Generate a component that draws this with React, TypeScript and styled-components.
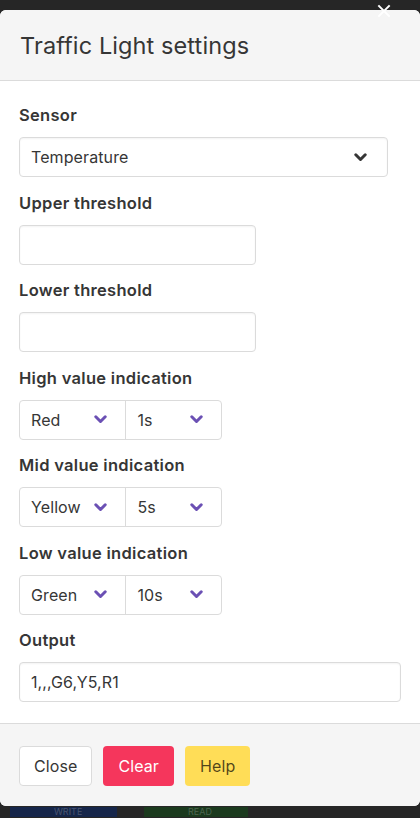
import React from "react";
import styled, { createGlobalStyle } from "styled-components";

const Global = createGlobalStyle`
  html, body { margin: 0; padding: 0; background: #262626; }
  body { font-family: Inter, "Noto Sans", "Liberation Sans", sans-serif; color: #363636; }
  * { box-sizing: border-box; }
`;

const Page = styled.div`
  position: relative;
  width: 420px;
  height: 818px;
  overflow: hidden;
  background: #262626;
  padding-top: 10px;
`;

const CloseX = styled.div`
  position: absolute;
  top: 4px;
  right: 29px;
  width: 14px;
  height: 14px;
  z-index: 3;
  &::before, &::after {
    content: "";
    position: absolute;
    left: 6px;
    top: -1px;
    width: 2px;
    height: 16px;
    background: #fff;
  }
  &::before { transform: rotate(45deg); }
  &::after { transform: rotate(-45deg); }
`;

const Card = styled.div`
  width: 420px;
  border-radius: 6px;
  overflow: hidden;
  background: #fff;
  display: flex;
  flex-direction: column;
`;

const Head = styled.header`
  background: #f5f5f5;
  border-bottom: 1px solid #dbdbdb;
  padding: 0 20px;
  height: 71px;
  display: flex;
  align-items: center;
`;

const Title = styled.h1`
  margin: 0;
  font-size: 23.5px;
  font-weight: 400;
  color: #363636;
  letter-spacing: 0.1px;
`;

const Body = styled.section`
  padding: 22px 19px 21px 19px;
  display: flex;
  flex-direction: column;
`;

const Field = styled.div`
  margin-bottom: 13.5px;
  &:last-child { margin-bottom: 0; }
`;

const Label = styled.label`
  display: block;
  font-size: 16.5px;
  line-height: 24px;
  font-weight: 600;
  letter-spacing: 0.3px;
  color: #363636;
  margin-bottom: 10px;
`;

const Box = styled.div<{ $w: number }>`
  position: relative;
  width: ${(p) => p.$w}px;
  height: 40px;
  border: 1px solid #dbdbdb;
  border-radius: 4px;
  background: #fff;
  display: flex;
  align-items: center;
  padding: 0 11px;
  font-size: 16px;
  letter-spacing: 0.1px;
  color: #363636;
  box-shadow: inset 0 1px 2px rgba(10, 10, 10, 0.05);
`;

const SelectBox = styled(Box)`
  justify-content: space-between;
  padding-right: 20px;
`;

const Group = styled.div`
  display: flex;
  width: 203px;
  height: 40px;
  border: 1px solid #dbdbdb;
  border-radius: 4px;
  background: #fff;
`;

const Part = styled.div<{ $w: number; $first?: boolean }>`
  width: ${(p) => p.$w}px;
  display: flex;
  align-items: center;
  justify-content: space-between;
  padding: 0 18px 0 11px;
  font-size: 16px;
  letter-spacing: 0.1px;
  color: #363636;
  border-left: ${(p) => (p.$first ? "none" : "1px solid #dbdbdb")};
`;

const Chev = ({ color, w = 13 }: { color: string; w?: number }) => (
  <svg width={w} height={9} viewBox="0 0 13 9" style={{ display: "block" }}>
    <polyline points="1.8,1.8 6.5,6.5 11.2,1.8" fill="none" stroke={color} strokeWidth="3" strokeLinecap="round" strokeLinejoin="round" />
  </svg>
);

const Foot = styled.footer`
  background: #f5f5f5;
  border-top: 1px solid #dbdbdb;
  padding: 22px 19px 20px;
  display: flex;
  gap: 11px;
`;

const Btn = styled.button<{ $bg: string; $fg: string; $border: string }>`
  height: 40px;
  padding: 0 14px;
  border-radius: 4px;
  border: 1px solid ${(p) => p.$border};
  background: ${(p) => p.$bg};
  color: ${(p) => p.$fg};
  font-family: inherit;
  font-size: 16px;
  letter-spacing: 0.1px;
`;

const Behind = styled.div`
  display: flex;
  margin-top: 1px;
  padding-left: 10px;
  gap: 27px;
`;

const BgBtn = styled.div<{ $bg: string; $w: number }>`
  width: ${(p) => p.$w}px;
  height: 10px;
  background: ${(p) => p.$bg};
  color: rgba(255, 255, 255, 0.22);
  font-size: 9px;
  line-height: 10px;
  padding-left: 44px;
  overflow: hidden;
  white-space: nowrap;
`;

const PURPLE = "#6b50b4";

const Pair = ({ a, b }: { a: string; b: string }) => (
  <Group>
    <Part $w={106} $first>
      {a}
      <Chev color={PURPLE} />
    </Part>
    <Part $w={96}>
      {b}
      <Chev color={PURPLE} />
    </Part>
  </Group>
);

export default function App() {
  return (
    <Page>
      <Global />
      <CloseX />
      <Card>
        <Head>
          <Title>Traffic Light settings</Title>
        </Head>
        <Body>
          <Field>
            <Label>Sensor</Label>
            <SelectBox $w={369}>
              Temperature
              <Chev color="#363636" />
            </SelectBox>
          </Field>
          <Field>
            <Label>Upper threshold</Label>
            <Box $w={237} />
          </Field>
          <Field>
            <Label>Lower threshold</Label>
            <Box $w={237} />
          </Field>
          <Field>
            <Label>High value indication</Label>
            <Pair a="Red" b="1s" />
          </Field>
          <Field>
            <Label>Mid value indication</Label>
            <Pair a="Yellow" b="5s" />
          </Field>
          <Field>
            <Label>Low value indication</Label>
            <Pair a="Green" b="10s" />
          </Field>
          <Field>
            <Label>Output</Label>
            <Box $w={382}>1,,,G6,Y5,R1</Box>
          </Field>
        </Body>
        <Foot>
          <Btn $bg="#fff" $fg="#363636" $border="#dbdbdb">Close</Btn>
          <Btn $bg="#f5365c" $fg="#fff" $border="transparent">Clear</Btn>
          <Btn $bg="#ffdd57" $fg="rgba(0,0,0,0.7)" $border="transparent">Help</Btn>
        </Foot>
      </Card>
      <Behind>
        <BgBtn $bg="#16264a" $w={107}>WRITE</BgBtn>
        <BgBtn $bg="#1b3a1e" $w={104}>READ</BgBtn>
      </Behind>
    </Page>
  );
}
